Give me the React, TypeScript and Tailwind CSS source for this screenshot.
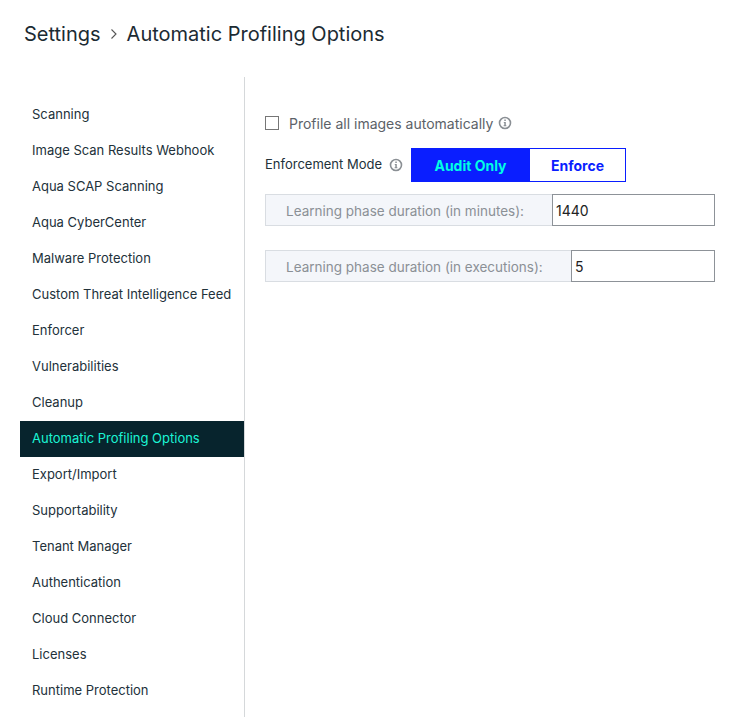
const items = [
  'Scanning', 'Image Scan Results Webhook', 'Aqua SCAP Scanning', 'Aqua CyberCenter', 'Malware Protection',
  'Custom Threat Intelligence Feed', 'Enforcer', 'Vulnerabilities', 'Cleanup', 'Automatic Profiling Options',
  'Export/Import', 'Supportability', 'Tenant Manager', 'Authentication', 'Cloud Connector', 'Licenses', 'Runtime Protection',
];

function Info() {
  return (
    <svg width="14" height="14" viewBox="0 0 14 14" className="shrink-0">
      <circle cx="7" cy="7" r="5.5" fill="none" stroke="#8a8f94" strokeWidth="1.6" />
      <path d="M6.3 3.6h1.5v1.4H6.3zM5.8 6h2v3.3h.6v.9H5.6v-.9h.7V6.9h-.5z" fill="#8a8f94" />
    </svg>
  );
}

function Field({ label, value, labelWidth }: { label: string; value: string; labelWidth: string }) {
  return (
    <div className="flex h-8 w-[450px]">
      <div className={`${labelWidth} flex shrink-0 items-center border border-r-0 border-[#d9dde2] bg-[#f4f6fa] pl-5 pt-[2px] text-[13.5px] text-[#8b9096]`}>
        {label}
      </div>
      <input defaultValue={value} className="min-w-0 flex-1 border border-[#8d9298] bg-white px-[3px] text-[14px] text-[#222] outline-none" />
    </div>
  );
}

export default function App() {
  return (
    <div className="h-[717px] w-[731px] overflow-hidden bg-white font-['Inter',sans-serif] text-[#22313a]">
      <header className="flex h-[77px] items-start pl-6 pt-[19px] text-[20px] leading-[30px] text-[#1c2b33]">
        <span>Settings</span>
        <svg width="8" height="12" viewBox="0 0 8 12" className="ml-[9px] mr-[9px] mt-[9px]">
          <path d="M1.5 1.5 6 6l-4.500 4.500" fill="none" stroke="#555" strokeWidth="1.1" />
        </svg>
        <span>Automatic Profiling Options</span>
      </header>
      <div className="flex h-[640px]">
        <nav className="ml-5 w-[225px] shrink-0 border-r border-[#d5d8da] pt-5 text-[13px]">
          {items.map((t) => (
            <div key={t} className={`flex h-9 items-center whitespace-nowrap pl-3 ${t === 'Automatic Profiling Options' ? 'bg-[#07242d] text-[#1bf5d5]' : ''}`}>
              {t}
            </div>
          ))}
        </nav>
        <main className="pl-5">
          <div className="mt-[37px] flex h-[18px] items-center text-[14px] text-[#5c6268]">
            <span className="mr-[10px] h-[14px] w-[14px] border border-[#767676]" />
            <span className="mr-[5px]">Profile all images automatically</span>
            <Info />
          </div>
          <div className="mt-4 flex h-[34px] items-center text-[13px]">
            <span className="w-[124px]">Enforcement Mode</span>
            <Info />
            <div className="ml-2 flex h-[34px] w-[215px] text-[14px] font-bold">
              <div className="flex w-[119px] items-center justify-center bg-[#0a1eff] text-[#00ffe4]">Audit Only</div>
              <div className="flex flex-1 items-center justify-center border border-l-0 border-[#0a1eff] text-[#0a1eff]">Enforce</div>
            </div>
          </div>
          <div className="mt-3 flex flex-col gap-6">
            <Field label="Learning phase duration (in minutes):" value="1440" labelWidth="w-[287px]" />
            <Field label="Learning phase duration (in executions):" value="5" labelWidth="w-[306px]" />
          </div>
        </main>
      </div>
    </div>
  );
}
